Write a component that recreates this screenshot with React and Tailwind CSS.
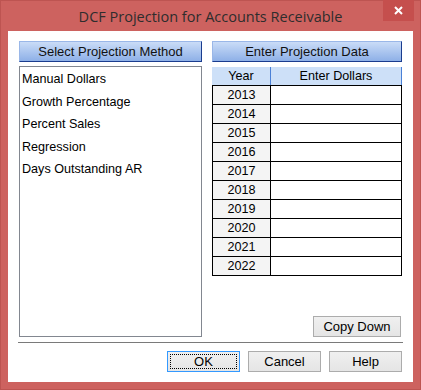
import React from 'react';

const methods = ['Manual Dollars', 'Growth Percentage', 'Percent Sales', 'Regression', 'Days Outstanding AR'];
const years = [2013, 2014, 2015, 2016, 2017, 2018, 2019, 2020, 2021, 2022];

function HeaderButton({ children }) {
  return (
    <div className="h-[21px] flex items-center justify-center border border-t-[#9ab7e8] border-l-[#9ab7e8] border-r-[#1a3c8e] border-b-[#1a3c8e] bg-gradient-to-b from-[#cadcf7] to-[#8eb0e7] text-[13px] text-[#111]">
      {children}
    </div>
  );
}

function GrayButton({ children, className = '' }) {
  return (
    <div className={`h-[21px] flex items-center justify-center border border-[#acacac] bg-gradient-to-b from-[#f0f0f0] to-[#e5e5e5] text-[13px] text-black ${className}`}>
      {children}
    </div>
  );
}

export default function App() {
  return (
    <div
      className="w-[421px] h-[390px] flex flex-col bg-[#cd625f] border border-[#bd5451]"
      style={{ fontFamily: '"Liberation Sans", Arial, sans-serif' }}
    >
      {/* Title bar */}
      <div className="relative h-[30px] flex items-center justify-center">
        <span
          className="text-[14.5px] text-[#2d2d2d] pt-[1px]"
          style={{ fontFamily: '"Open Sans", "Noto Sans", sans-serif' }}
        >
          DCF Projection for Accounts Receivable
        </span>
        <div className="absolute right-[6px] top-[-1px] w-[31px] h-[21px] bg-[#c54f4d] flex items-center justify-center">
          <svg width="9" height="9" viewBox="0 0 9 9">
            <path d="M1 1 L8 8 M8 1 L1 8" stroke="white" strokeWidth="2" />
          </svg>
        </div>
      </div>

      {/* Client area */}
      <div className="mx-[7px] h-[351px] bg-white flex flex-col px-[11px] pt-[10px]">
        <div className="flex gap-[10px] h-[296px]">
          {/* Left column */}
          <div className="w-[183px] flex flex-col">
            <HeaderButton>Select Projection Method</HeaderButton>
            <div className="mt-[4px] h-[271px] border border-[#828790] pl-[2px] pt-[1px] text-[12.6px] leading-[22.5px] text-black">
              {methods.map((m) => (
                <div key={m}>{m}</div>
              ))}
            </div>
          </div>

          {/* Right column */}
          <div className="w-[190px] flex flex-col">
            <HeaderButton>Enter Projection Data</HeaderButton>
            <div className="mt-[5px] flex flex-col text-[12.6px] text-black">
              <div className="h-[18px] flex bg-[#cde0f8] border-r border-[#4a80d6]">
                <div className="w-[59px] border-r border-[#4a80d6] flex items-center justify-center">Year</div>
                <div className="flex-1 flex items-center justify-center">Enter Dollars</div>
              </div>
              <div className="border-l border-r border-b border-black">
                {years.map((y) => (
                  <div key={y} className="h-[19px] flex border-t border-black">
                    <div className="w-[58px] bg-[#f4f4f4] border-r border-black flex items-center justify-center">{y}</div>
                    <div className="flex-1 bg-white" />
                  </div>
                ))}
              </div>
            </div>
            <div className="flex-1" />
            <div className="flex justify-end pr-[1px]">
              <GrayButton className="w-[88px]">Copy Down</GrayButton>
            </div>
          </div>
        </div>

        {/* Separator */}
        <div className="mt-[5px] -mx-[1px] h-[2px] border-t border-[#7a7a7a]" />

        {/* Bottom buttons */}
        <div className="mt-[7px] flex justify-end gap-[8px]">
          <div className="w-[73px] h-[21px] border border-[#3399ff] bg-gradient-to-b from-[#f0f0f0] to-[#e5e5e5] p-[2px] flex">
            <div className="flex-1 border border-dotted border-black flex items-center justify-center text-[13px] text-black">OK</div>
          </div>
          <GrayButton className="w-[73px]">Cancel</GrayButton>
          <GrayButton className="w-[73px]">Help</GrayButton>
        </div>
      </div>
    </div>
  );
}
